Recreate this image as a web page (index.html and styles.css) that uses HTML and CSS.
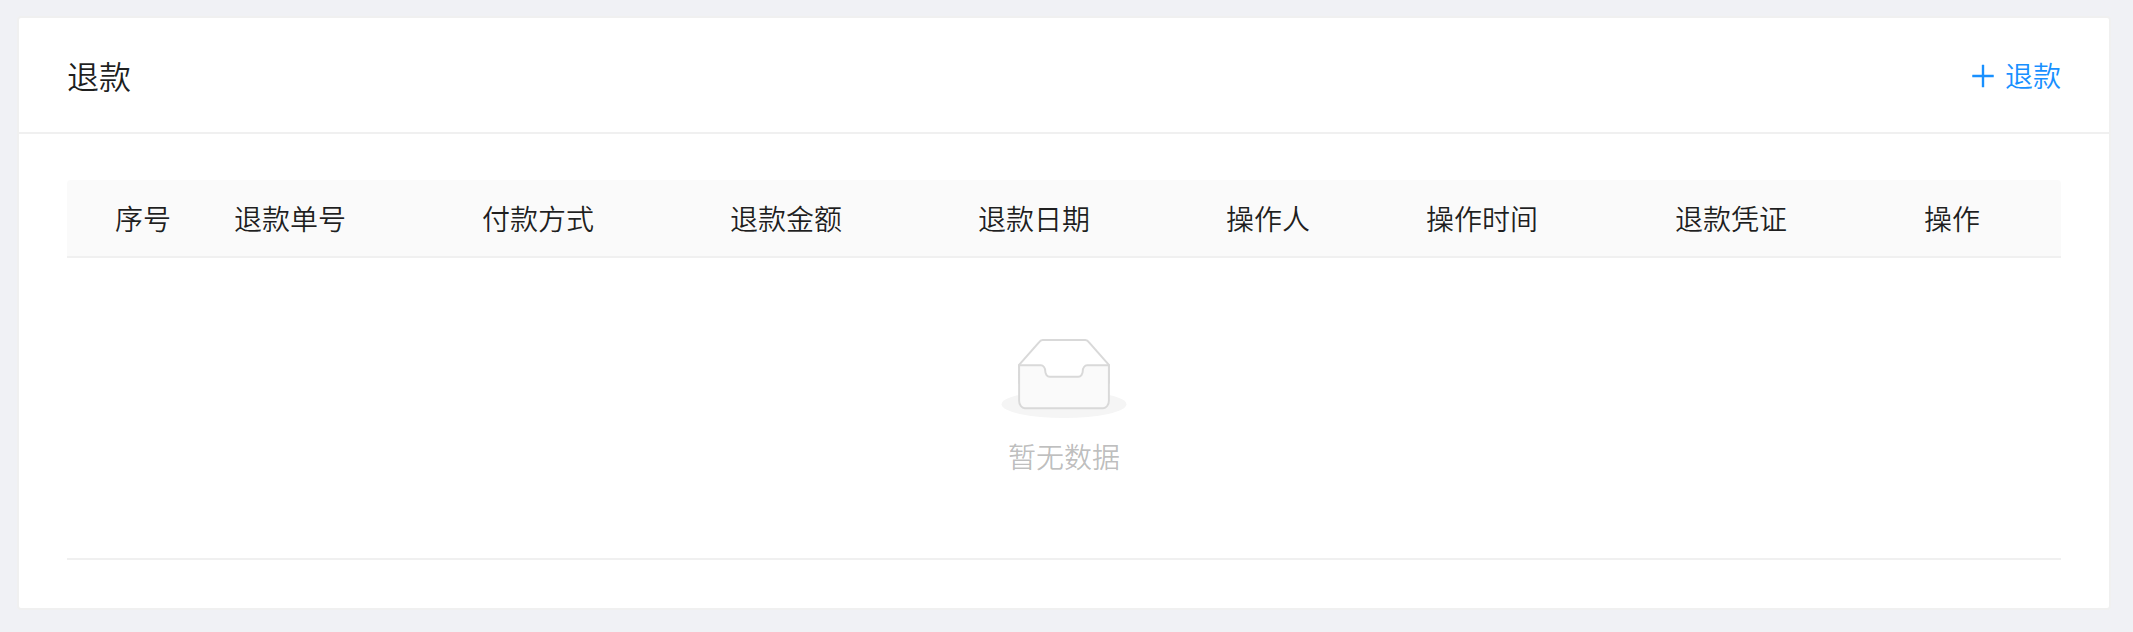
FILE: index.html
```html
<!DOCTYPE html>
<html lang="zh-CN">
<head>
    <meta charset="UTF-8">
    <meta name="viewport" content="width=device-width, initial-scale=1.0">
    <title>退款</title>
    <link rel="stylesheet" href="styles.css">
</head>
<body>
    <div class="card">
        <div class="card-head">
            <div class="card-title">退款</div>
            <a class="add-link" href="#">
                <svg class="plus-icon" viewBox="64 64 896 896" fill="currentColor">
                    <path d="M482 152h60q8 0 8 8v704q0 8-8 8h-60q-8 0-8-8V160q0-8 8-8z"/>
                    <path d="M176 474h672q8 0 8 8v60q0 8-8 8H176q-8 0-8-8v-60q0-8 8-8z"/>
                </svg>
                <span>退款</span>
            </a>
        </div>
        <div class="card-body">
            <table class="table">
                <colgroup>
                    <col class="col-index">
                    <col class="col-wide">
                    <col class="col-wide">
                    <col class="col-wide">
                    <col class="col-wide">
                    <col class="col-operator">
                    <col class="col-time">
                    <col class="col-time">
                    <col>
                </colgroup>
                <thead>
                    <tr>
                        <th>序号</th>
                        <th>退款单号</th>
                        <th>付款方式</th>
                        <th>退款金额</th>
                        <th>退款日期</th>
                        <th>操作人</th>
                        <th>操作时间</th>
                        <th>退款凭证</th>
                        <th>操作</th>
                    </tr>
                </thead>
                <tbody>
                    <tr>
                        <td colspan="9">
                            <div class="empty">
                                <svg class="empty-image" viewBox="0 0 64 41">
                                    <g transform="translate(0 1)" fill="none" fill-rule="evenodd">
                                        <ellipse fill="#f5f5f5" cx="32" cy="33" rx="32" ry="7"/>
                                        <g fill-rule="nonzero" stroke="#d9d9d9">
                                            <path d="M55 12.76L44.854 1.258C44.367.474 43.656 0 42.907 0H21.093c-.749 0-1.46.474-1.947 1.257L9 12.761V22h46v-9.24z"/>
                                            <path d="M41.613 15.931c0-1.605.994-2.93 2.227-2.931H55v18.137C55 33.26 53.68 35 52.05 35h-40.1C10.32 35 9 33.259 9 31.137V13h11.16c1.233 0 2.227 1.323 2.227 2.928v.022c0 1.605 1.005 2.901 2.237 2.901h14.752c1.232 0 2.237-1.308 2.237-2.913v-.007z" fill="#fafafa"/>
                                        </g>
                                    </g>
                                </svg>
                                <p class="empty-text">暂无数据</p>
                            </div>
                        </td>
                    </tr>
                </tbody>
            </table>
        </div>
    </div>
</body>
</html>
```
FILE: styles.css
```css
* {
    margin: 0;
    padding: 0;
    box-sizing: border-box;
}

body {
    padding: 16px 22px 22px 17px;
    background-color: #f0f1f5;
    font-family: "Noto Sans CJK SC", sans-serif;
    font-size: 28px;
    font-weight: 350;
    line-height: 44px;
    color: rgba(0, 0, 0, 0.88);
}

.card {
    background-color: #fff;
    border: 2px solid #f0f0f0;
    border-radius: 4px;
}

.card-head {
    display: flex;
    align-items: center;
    justify-content: space-between;
    height: 116px;
    padding: 0 48px;
    border-bottom: 2px solid #f0f0f0;
}

.card-title {
    font-size: 32px;
    line-height: 50px;
}

.add-link {
    display: flex;
    align-items: center;
    gap: 8px;
    color: #1890ff;
    text-decoration: none;
}

.plus-icon {
    width: 28px;
    height: 28px;
    margin-top: 2px;
}

.card-body {
    padding: 46px 48px 48px;
}

.table {
    width: 100%;
    table-layout: fixed;
    border-collapse: separate;
    border-spacing: 0;
}

.col-index {
    width: 151px;
}

.col-wide {
    width: 248px;
}

.col-operator {
    width: 200px;
}

.col-time {
    width: 249px;
}

.table th {
    padding: 16px;
    font-weight: 350;
    text-align: left;
    background-color: #fafafa;
    border-bottom: 2px solid #f0f0f0;
}

.table th:first-child {
    padding-left: 48px;
    border-top-left-radius: 4px;
}

.table th:last-child {
    border-top-right-radius: 4px;
}

.table td {
    padding: 16px;
    border-bottom: 2px solid #f0f0f0;
}

.empty {
    margin: 64px 0;
    text-align: center;
}

.empty-image {
    display: block;
    width: 128px;
    height: 80px;
    margin: 0 auto 16px;
}

.empty-text {
    color: rgba(0, 0, 0, 0.27);
}
```
